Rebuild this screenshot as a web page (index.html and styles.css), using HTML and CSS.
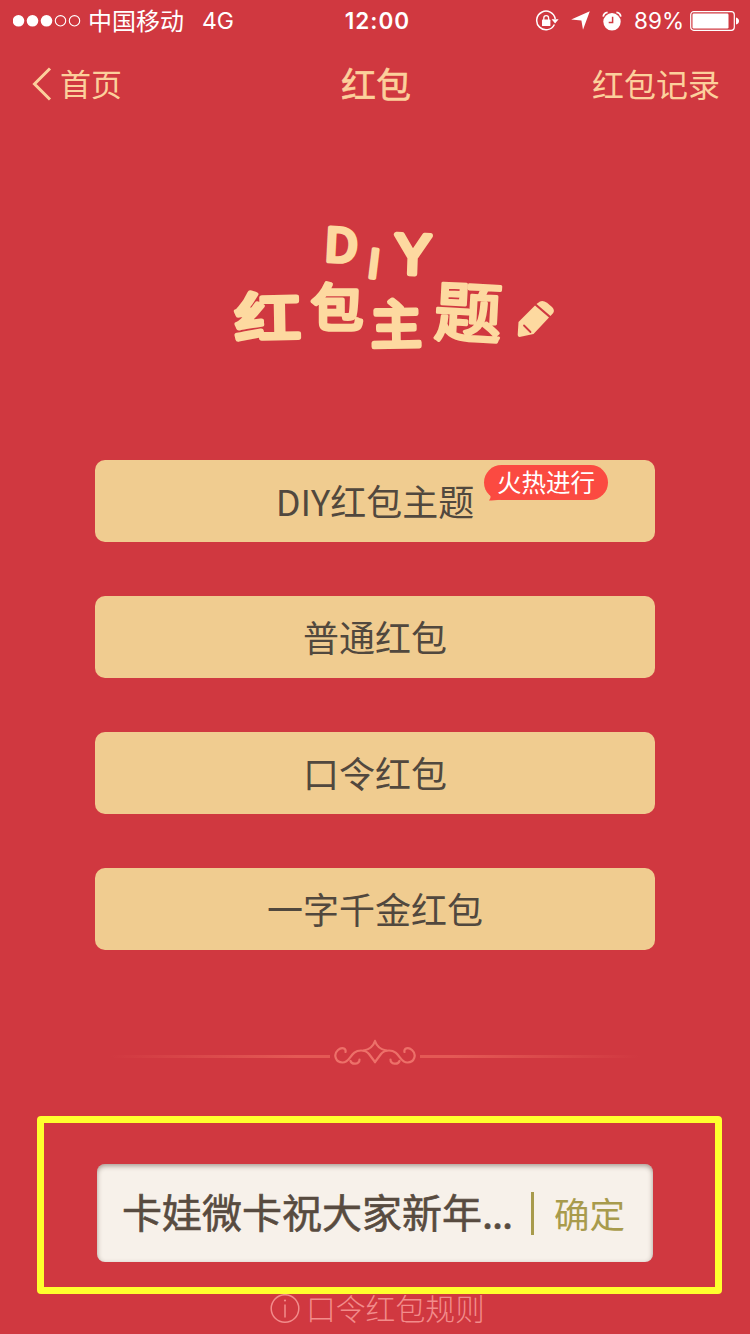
FILE: index.html
```html
<!DOCTYPE html>
<html lang="zh-CN">
<head>
<meta charset="utf-8">
<title>红包</title>
<link rel="stylesheet" href="styles.css">
</head>
<body>
<div class="screen">
  <div class="status">
    <div class="status-left">
      <svg class="signal" width="70" height="14" viewBox="0 0 70 14">
        <g fill="#fff"><circle cx="5.500" cy="6.800" r="5.800"/><circle cx="19.500" cy="6.800" r="5.800"/><circle cx="33.500" cy="6.800" r="5.800"/></g>
        <g fill="none" stroke="#fff" stroke-width="1.100"><circle cx="47.500" cy="6.800" r="5.200"/><circle cx="61.500" cy="6.800" r="5.200"/></g>
      </svg>
      <span class="carrier">中国移动</span>
      <span class="network">4G</span>
    </div>
    <span class="clock">12:00</span>
    <div class="status-right">
      <svg width="24" height="22" viewBox="0 0 24 22">
        <path d="M19.4 14.5A9.3 9.3 0 1 1 20.2 9" fill="none" stroke="#fff" stroke-width="1.500"/>
        <path d="M16.6 9.2h7l-3.500 4.400z" fill="#fff"/>
        <rect x="7" y="9.600" width="8.400" height="6.400" rx=".6" fill="#fff"/>
        <path d="M8.8 10V8a2.4 2.4 0 0 1 4.8 0v2" fill="none" stroke="#fff" stroke-width="1.300"/>
      </svg>
      <svg width="19" height="19" viewBox="0 0 19 19"><path d="M18.8.2 12 18.800 10.400 9.400 .2 8.600z" fill="#fff"/></svg>
      <svg width="20" height="20" viewBox="0 0 20 20">
        <circle cx="10" cy="10.800" r="8.700" fill="#fff"/>
        <path d="M10.6 5.700v5.700H6.700" fill="none" stroke="#d03840" stroke-width="1.500"/>
        <path d="M1.2 5.600A5 5 0 0 1 5.600 1.300M18.800 5.600A5 5 0 0 0 14.400 1.300" fill="none" stroke="#fff" stroke-width="1.700"/>
      </svg>
      <span class="percent">89%</span>
      <svg class="battery" width="50" height="20" viewBox="0 0 50 20">
        <rect x=".7" y=".7" width="43.600" height="18.600" rx="3" fill="none" stroke="#fff" stroke-width="1.200"/>
        <rect x="2.500" y="2.500" width="36" height="15" rx="1.200" fill="#fff"/>
        <path d="M46 6.500q3 1 3 3.500t-3 3.500z" fill="#fff"/>
      </svg>
    </div>
  </div>

  <div class="nav">
    <div class="back">
      <svg width="20" height="34" viewBox="0 0 20 34"><path d="M18 1.500 2.500 17 18 32.500" fill="none" stroke="#fcd09c" stroke-width="3"/></svg>
      <span>首页</span>
    </div>
    <h1 class="title">红包</h1>
    <span class="records">红包记录</span>
  </div>

  <svg class="logo" width="340" height="145" viewBox="225 215 340 145">
    <g class="logo-text">
      <text transform="translate(323.500 261) rotate(3) scale(.98 .92)">D</text>
      <text class="plain" transform="translate(366.500 277) rotate(7) scale(.9 .9)">I</text>
      <text class="plain" transform="translate(394 273) rotate(2) scale(1.180 1.220)">Y</text>
      <text transform="translate(235 338) rotate(-1) scale(1.320 1.070)">红</text>
      <text transform="translate(311 326) scale(1.040 1)">包</text>
      <text transform="translate(371 344.500) rotate(-1) scale(1.020 1.060)">主</text>
      <text class="dense" transform="translate(433 335) rotate(3) scale(1.360 1.310)">题</text>
    </g>
    <g fill="#fdd9a0">
      <path d="M535 305.500 549 317.500 533.500 334 519.500 337q-2-.3-1.800-2.200L518.500 322z"/>
      <path d="M536.500 304 540 301.500q3-1.500 7 1.300l5 4.200q3 3 1.200 6L550.500 316z"/>
    </g>
    <path d="M524 325.500 530.500 332" stroke="#d03840" stroke-width="1.800" stroke-linecap="round"/>
  </svg>

  <div class="options">
    <div class="option"><span class="option-label">DIY红包主题</span><span class="hot">
      <svg class="hot-tail" width="16" height="14" viewBox="0 0 16 14"><path d="M0 0Q5 7 1 11.500q7 .5 15-2V0z" fill="#fb4a41"/></svg><span class="hot-label">火热进行</span></span></div>
    <div class="option">普通红包</div>
    <div class="option">口令红包</div>
    <div class="option">一字千金红包</div>
  </div>

  <div class="divider">
    <span class="line line-left"></span>
    <svg width="84" height="30" viewBox="0 0 84 30" fill="none" stroke="#ed7069" stroke-width="2.200" stroke-linecap="round">
      <path id="scroll" d="M12.500 13C13.500 9 8.500 8 5 11C0 15.500 2.500 23.500 9.500 23.500C18 23.500 17 11.500 28 11.500c4 0 6 1 8 3.500l6 8M26.500 20.500c0 5-7.500 5.500-9 1.500"/>
      <use href="#scroll" transform="matrix(-1 0 0 1 84 0)"/>
      <path d="M42 2Q39.500 10 30.500 11.500M42 2q2.500 8 11.500 9.500"/>
    </svg>
    <span class="line line-right"></span>
  </div>

  <div class="highlight">
    <div class="field">
      <span class="message">卡娃微卡祝大家新年<span class="dots">...</span></span>
      <span class="confirm">确定</span>
    </div>
  </div>

  <div class="rules">
    <svg width="30" height="30" viewBox="0 0 30 30" fill="none" stroke="#f28c8b">
      <circle cx="15" cy="14.500" r="13.800" stroke-width="1.500"/><path d="M15 10.500v13" stroke-width="1.500"/><circle cx="15" cy="6.500" r="1.100" fill="#f28c8b" stroke="none"/>
    </svg>
    <span class="rules-label">口令红包规则</span>
  </div>
</div>
</body>
</html>
```
FILE: styles.css
```css
* { box-sizing: border-box; }
body { margin: 0; }
.screen {
  width: 750px; height: 1334px; overflow: hidden;
  display: flex; flex-direction: column;
  background: #d03840;
  font-family: "Noto Sans CJK SC", sans-serif;
  font-weight: 400;
}
.status {
  height: 40px; padding: 0 11px 0 13px;
  display: grid; grid-template-columns: 1fr auto 1fr; align-items: center;
  color: #fff; font-family: Inter, "Noto Sans CJK SC", sans-serif; font-size: 24px; line-height: 40px;
}
.status-left, .status-right { display: flex; align-items: center; }
.carrier { margin-left: 5px; padding-top: 2px; line-height: 38px; }
.network { margin-left: 18px; padding-top: 1px; font-size: 23px; }
.clock { padding: 1px 0 0 3px; font-weight: 600; font-size: 22.500px; letter-spacing: 1px; }
.status-right { justify-content: flex-end; }
.status-right svg + svg { margin-left: 12px; }
.percent { margin-left: 12px; padding-top: 1px; font-size: 22.500px; }
.status-right .percent + .battery { margin-left: 6px; margin-right: -1px; }
.nav {
  height: 88px; padding: 0 30px 0 32px;
  display: grid; grid-template-columns: 1fr auto 1fr; align-items: center;
  color: #fcd09c; font-size: 32px; line-height: 46px;
}
.back { display: flex; align-items: center; gap: 8px; font-size: 31px; }
.back span, .records { padding-bottom: 3px; }
.title { margin: 0; padding-bottom: 2px; font-size: 35px; font-weight: 400; line-height: 46px; -webkit-text-stroke: .6px; }
.records { text-align: right; }
.logo { margin: 87px 0 0 225px; flex: none; overflow: visible; }
.logo-text {
  font-family: "Noto Sans CJK SC", sans-serif; font-size: 50px; font-weight: 400;
  fill: #fdd9a0; stroke: #fdd9a0; stroke-width: 4.500px; stroke-linejoin: round;
}
.plain { font-family: "Liberation Sans", sans-serif; font-size: 46px; }
.dense { stroke-width: 2.400px; }
.options { margin: 100px 95px 0; display: grid; gap: 54px; }
.option {
  position: relative; height: 82px; border-radius: 10px;
  background: #f0cc90; color: #51483e;
  font-size: 36px; line-height: 80px; text-align: center;
}
.hot {
  position: absolute; left: 389px; top: 5px; width: 124px; height: 35px;
  border-radius: 18px; background: #fb4a41; color: #fff;
  font-size: 24.500px; line-height: 34px;
}
.hot-tail { position: absolute; left: 4px; top: 24px; }
.hot-label { position: relative; }
.divider { height: 30px; margin: 89px 110px 0; display: flex; gap: 3px; align-items: center; }
.line { flex: 1; height: 3px; margin-top: 4px; }
.line-left { background: linear-gradient(90deg, transparent, #e45955 85%); }
.line-right { background: linear-gradient(270deg, transparent, #e45955 85%); }
.highlight {
  width: 685px; height: 178px; margin: 47px 0 0 37px; padding: 41px 62px 0 53px;
  border: 7px solid #ffff2e; border-radius: 4px; flex: none;
}
.field {
  height: 98px; width: 556px; padding-left: 25px; border-radius: 8px;
  display: flex; align-items: center;
  background: #f7f1ea; box-shadow: inset 0 2px 5px rgba(70, 50, 40, .45);
}
.message { width: 409px; padding-bottom: 4px; font-size: 40px; color: #584b40; white-space: nowrap; line-height: 58px; -webkit-text-stroke: .6px; }
.dots { letter-spacing: -1.100px; }
.confirm { height: 43px; padding-left: 20px; border-left: 3px solid #a89b4c; color: #a89b4c; font-size: 35.500px; line-height: 41px; }
.rules {
  display: flex; align-items: center; gap: 6px; height: 30px; margin-left: 270px;
  color: #f28c8b; font-size: 29.800px; font-weight: 300; line-height: 30px;
}
.rules-label { padding-bottom: 4px; }
```
